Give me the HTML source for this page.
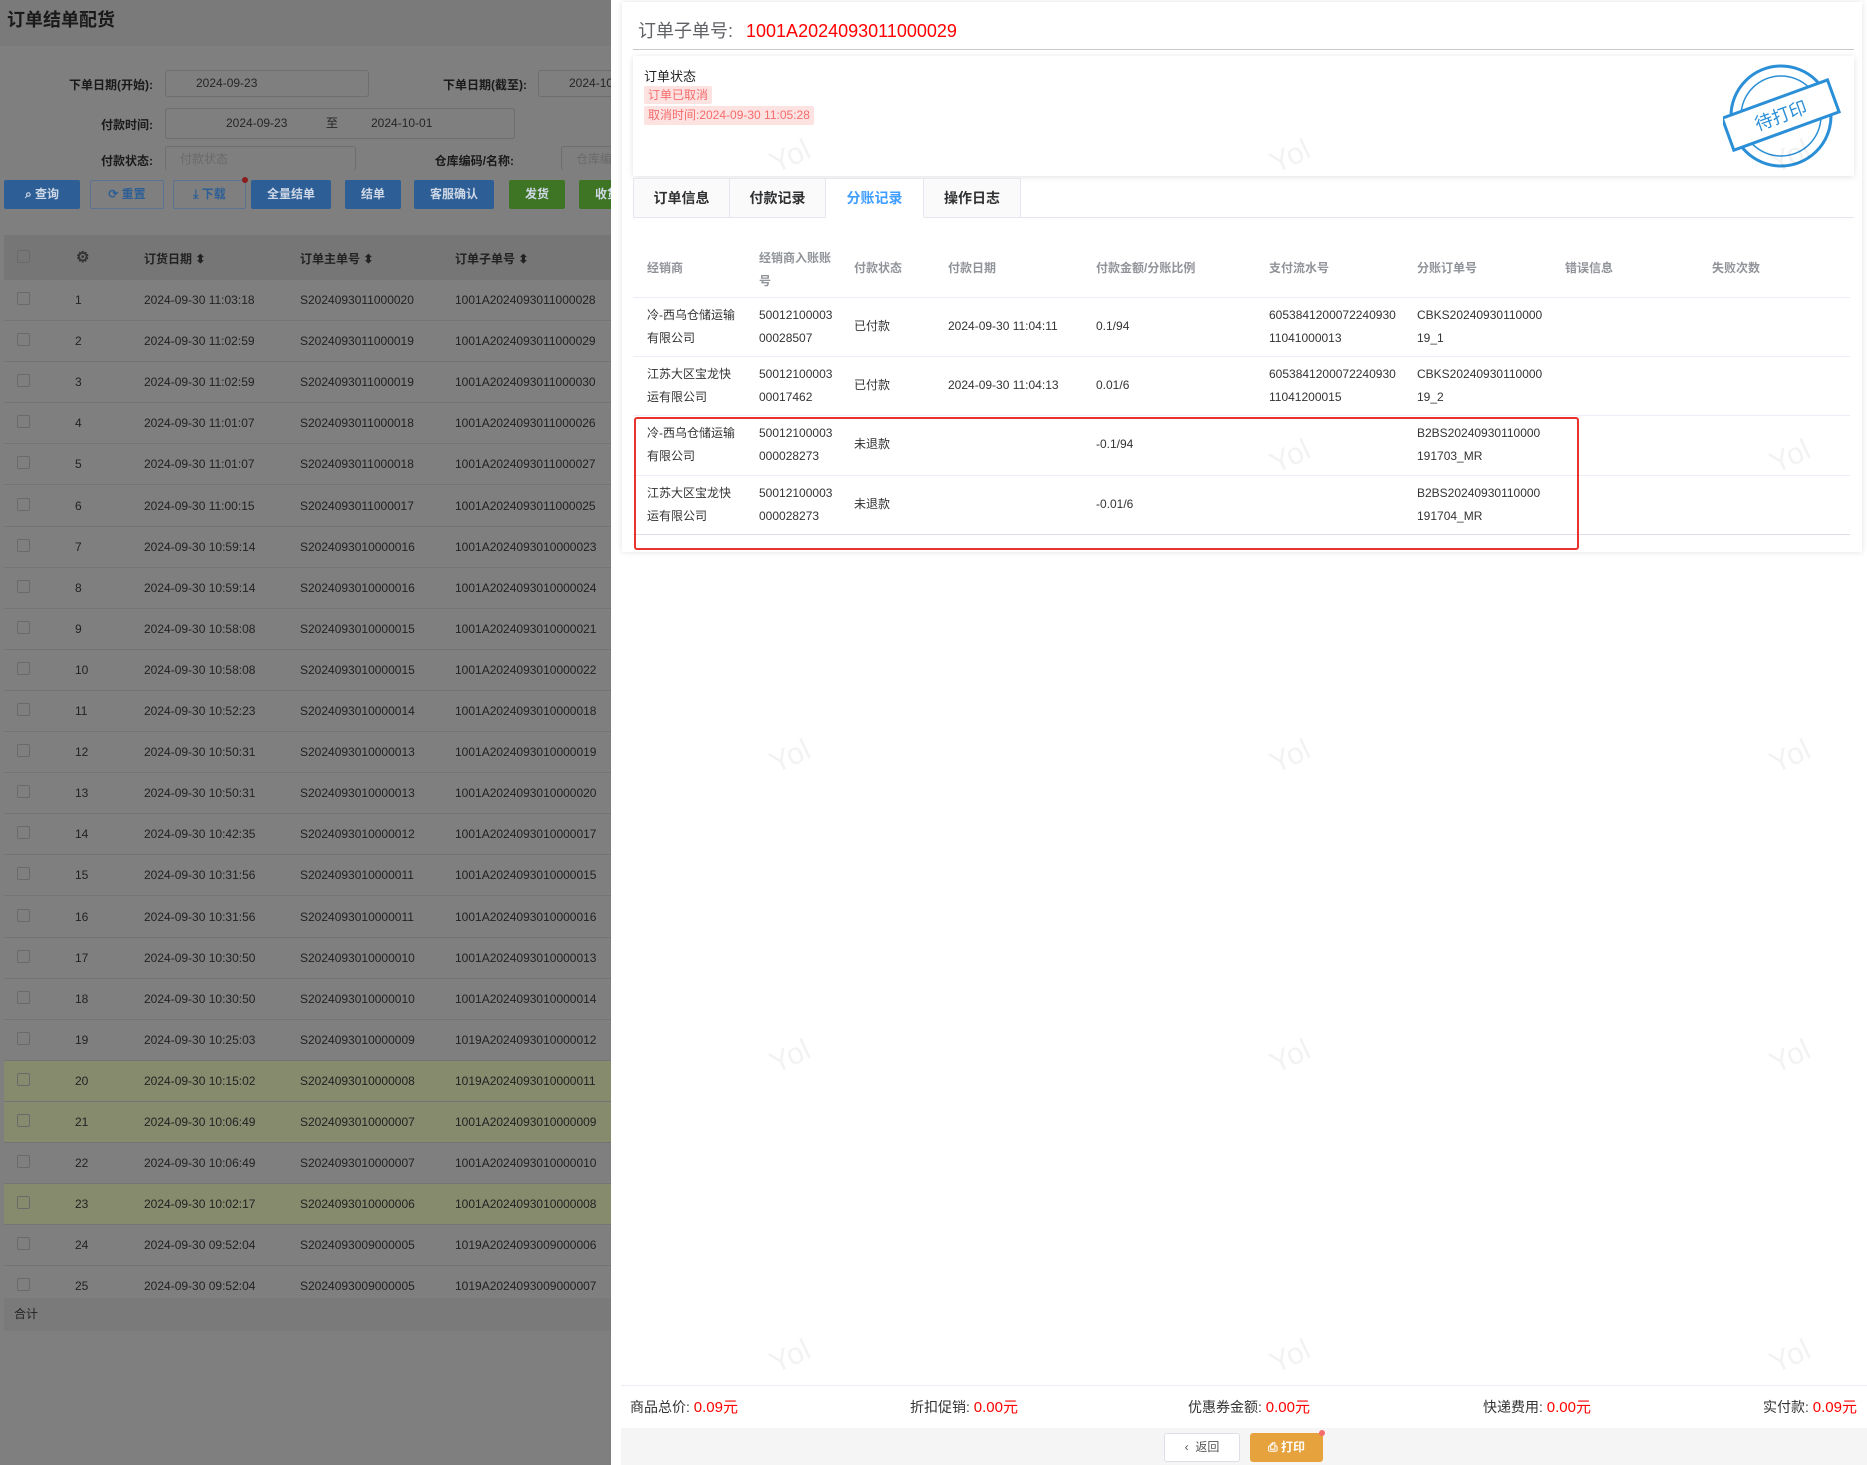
<!DOCTYPE html>
<html><head><meta charset="utf-8"><style>
*{box-sizing:border-box;margin:0;padding:0}
body{width:1867px;height:1465px;position:relative;overflow:hidden;background:#fff;font-family:"Liberation Sans","Noto Sans CJK SC",sans-serif;color:#333}
.a{position:absolute;white-space:nowrap}
#left{position:absolute;left:0;top:0;width:611px;height:1465px;background:#7f7f7f;overflow:hidden}
.lbl{font-size:12px;font-weight:bold;color:#1a1a1a;text-align:right}
.inp{border:1px solid #6e6e6e;border-radius:3px;height:27px;font-size:12px;color:#262626;line-height:25px}
.btn{height:29px;top:180px;border-radius:2px;color:#cfd8e6;font-size:12px;font-weight:bold;text-align:center;line-height:29px}
.row{position:absolute;left:4px;width:607px;height:41px;border-bottom:1px solid #747474;font-size:12px;color:#222}
.row span{position:absolute;top:13px}
.cb{position:absolute;left:13px;top:12px;width:13px;height:13px;border:1px solid #6a6a6a;border-radius:2px}
.wm{position:absolute;font-size:30px;color:rgba(0,0,0,0.05);transform:rotate(-25deg)}
th,td{text-align:left;font-weight:normal}
.th{font-size:12px;color:#909399;font-weight:bold}
.td{font-size:12px;color:#333;line-height:23px}
.hl{position:absolute;left:633px;width:1217px;height:1px;background:#ebeef5}
.tab{position:absolute;top:178px;height:40px;border:1px solid #e4e7ed;border-left:none;background:#fafafa;font-size:14px;font-weight:bold;text-align:center;line-height:38px;color:#303133}
.ft{font-size:14px;color:#333;top:1396px}
.ft b{color:#f00;font-weight:normal;font-size:15px}
</style></head><body>
<div id="left">
 <div class="a" style="left:0;top:0;width:611px;height:46px;background:#7a7a7a"></div>
 <div class="a" style="left:7px;top:6px;font-size:18px;font-weight:bold;color:#1a1a1a">订单结单配货</div>
 <div class="a lbl" style="left:40px;width:113px;top:76px">下单日期(开始):</div>
 <div class="a inp" style="left:165px;top:70px;width:204px;padding-left:30px">2024-09-23</div>
 <div class="a lbl" style="left:420px;width:107px;top:76px">下单日期(截至):</div>
 <div class="a inp" style="left:538px;top:70px;width:120px;padding-left:30px">2024-10-01</div>
 <div class="a lbl" style="left:40px;width:113px;top:116px">付款时间:</div>
 <div class="a inp" style="left:165px;top:108px;width:350px;height:31px;line-height:29px"><span class="a" style="left:60px">2024-09-23</span><span class="a" style="left:160px">至</span><span class="a" style="left:205px">2024-10-01</span></div>
 <div class="a lbl" style="left:40px;width:113px;top:152px">付款状态:</div>
 <div class="a inp" style="left:165px;top:146px;width:191px;height:25px;border-bottom:none;color:#6a6a6a;padding-left:14px">付款状态</div>
 <div class="a lbl" style="left:400px;width:114px;top:152px">仓库编码/名称:</div>
 <div class="a inp" style="left:561px;top:146px;width:100px;height:25px;border-bottom:none;color:#6a6a6a;padding-left:14px">仓库编码/名称</div>
 <div class="a btn" style="left:4px;width:76px;background:#2d5f96">⌕ 查询</div>
 <div class="a btn" style="left:90px;width:74px;border:1px solid #5a7393;color:#2d5f96;line-height:27px">⟳ 重置</div>
 <div class="a btn" style="left:173px;width:73px;border:1px solid #5a7393;color:#2d5f96;line-height:27px">⤓ 下载</div>
 <div class="a" style="left:242px;top:177px;width:6px;height:6px;border-radius:3px;background:#8a1d1d"></div>
 <div class="a btn" style="left:251px;width:80px;background:#2d5f96">全量结单</div>
 <div class="a btn" style="left:345px;width:56px;background:#2d5f96">结单</div>
 <div class="a btn" style="left:414px;width:80px;background:#2d5f96">客服确认</div>
 <div class="a btn" style="left:509px;width:56px;background:#3e7524">发货</div>
 <div class="a btn" style="left:579px;width:56px;background:#3e7524">收货</div>
 <div class="a" style="left:4px;top:235px;width:607px;height:45px;background:#767676;font-size:12px;font-weight:bold;color:#222">
  <div class="cb" style="top:15px"></div>
  <span class="a" style="left:72px;top:13px;font-size:15px;color:#333">⚙</span>
  <span class="a" style="left:140px;top:15px">订货日期 ⬍</span>
  <span class="a" style="left:296px;top:15px">订单主单号 ⬍</span>
  <span class="a" style="left:451px;top:15px">订单子单号 ⬍</span>
 </div>
 <div id="rows"></div>
 <div class="a" style="left:4px;top:1298px;width:607px;height:33px;background:#7a7a7a;font-size:12px;color:#222;padding:7px 10px">合计</div>
</div>
<script>
var d=[["2024-09-30 11:03:18","S2024093011000020","1001A2024093011000028"],["2024-09-30 11:02:59","S2024093011000019","1001A2024093011000029"],["2024-09-30 11:02:59","S2024093011000019","1001A2024093011000030"],["2024-09-30 11:01:07","S2024093011000018","1001A2024093011000026"],["2024-09-30 11:01:07","S2024093011000018","1001A2024093011000027"],["2024-09-30 11:00:15","S2024093011000017","1001A2024093011000025"],["2024-09-30 10:59:14","S2024093010000016","1001A2024093010000023"],["2024-09-30 10:59:14","S2024093010000016","1001A2024093010000024"],["2024-09-30 10:58:08","S2024093010000015","1001A2024093010000021"],["2024-09-30 10:58:08","S2024093010000015","1001A2024093010000022"],["2024-09-30 10:52:23","S2024093010000014","1001A2024093010000018"],["2024-09-30 10:50:31","S2024093010000013","1001A2024093010000019"],["2024-09-30 10:50:31","S2024093010000013","1001A2024093010000020"],["2024-09-30 10:42:35","S2024093010000012","1001A2024093010000017"],["2024-09-30 10:31:56","S2024093010000011","1001A2024093010000015"],["2024-09-30 10:31:56","S2024093010000011","1001A2024093010000016"],["2024-09-30 10:30:50","S2024093010000010","1001A2024093010000013"],["2024-09-30 10:30:50","S2024093010000010","1001A2024093010000014"],["2024-09-30 10:25:03","S2024093010000009","1019A2024093010000012"],["2024-09-30 10:15:02","S2024093010000008","1019A2024093010000011"],["2024-09-30 10:06:49","S2024093010000007","1001A2024093010000009"],["2024-09-30 10:06:49","S2024093010000007","1001A2024093010000010"],["2024-09-30 10:02:17","S2024093010000006","1001A2024093010000008"],["2024-09-30 09:52:04","S2024093009000005","1019A2024093009000006"],["2024-09-30 09:52:04","S2024093009000005","1019A2024093009000007"]];
var h="";for(var i=0;i<25;i++){var t=280+i*41.1;var bg=(i==19||i==20||i==22)?"background:#878b6e;":"";
h+='<div class="row" style="top:'+t+'px;'+bg+'"><div class="cb"></div><span style="left:71px">'+(i+1)+'</span><span style="left:140px">'+d[i][0]+'</span><span style="left:296px">'+d[i][1]+'</span><span style="left:451px">'+d[i][2]+'</span></div>';}
document.getElementById("rows").innerHTML=h;
</script>

<!-- right drawer -->
<div class="a" style="left:622px;top:2px;width:1240px;height:550px;box-shadow:0 0 6px rgba(0,0,0,0.12)"></div>
<div class="a" style="left:638px;top:17px;font-size:18px;color:#606266">订单子单号: <span style="color:#f00;margin-left:8px">1001A2024093011000029</span></div>
<div class="a" style="left:633px;top:49px;width:1221px;height:1px;background:#c8c9cc"></div>
<div class="a" style="left:633px;top:56px;width:1221px;height:120px;background:#fff;box-shadow:0 1px 6px rgba(0,0,0,0.12)">
 <div class="a" style="left:11px;top:10px;font-size:13px;color:#222">订单状态</div>
 <div class="a" style="left:11px;top:30px;height:18px;padding:0 4px;background:#fde2e2;color:#f56c6c;font-size:12px;line-height:18px;border-radius:2px">订单已取消</div>
 <div class="a" style="left:11px;top:50px;height:19px;padding:0 4px;background:#fde2e2;color:#f56c6c;font-size:12px;line-height:19px;border-radius:2px">取消时间:2024-09-30 11:05:28</div>
 <svg class="a" style="left:1090px;top:4px" width="120" height="110" viewBox="0 0 120 110">
  <circle cx="58" cy="56" r="50" fill="none" stroke="#2a8fd6" stroke-width="3"/>
  <circle cx="58" cy="56" r="40" fill="none" stroke="#2a8fd6" stroke-width="1.5"/>
  <g transform="rotate(-20 58 56)"><rect x="2" y="38" width="112" height="34" fill="#fff" stroke="#2a8fd6" stroke-width="3"/>
  <text x="58" y="62" font-size="18" fill="#2a8fd6" text-anchor="middle" font-family="Liberation Sans,Noto Sans CJK SC,sans-serif">待打印</text></g>
 </svg>
</div>
<div class="a" style="left:633px;top:217px;width:1221px;height:1px;background:#e4e7ed"></div>
<div class="tab" style="left:633px;width:97px;border-left:1px solid #e4e7ed">订单信息</div>
<div class="tab" style="left:730px;width:96px">付款记录</div>
<div class="tab" style="left:826px;width:98px;background:#fff;border-bottom-color:#fff;color:#409eff">分账记录</div>
<div class="tab" style="left:924px;width:97px">操作日志</div>

<div class="a th" style="left:647px;top:259px">经销商</div>
<div class="a th" style="left:759px;top:247px;line-height:23px;white-space:normal;width:80px">经销商入账账<br>号</div>
<div class="a th" style="left:854px;top:259px">付款状态</div>
<div class="a th" style="left:948px;top:259px">付款日期</div>
<div class="a th" style="left:1096px;top:259px">付款金额/分账比例</div>
<div class="a th" style="left:1269px;top:259px">支付流水号</div>
<div class="a th" style="left:1417px;top:259px">分账订单号</div>
<div class="a th" style="left:1565px;top:259px">错误信息</div>
<div class="a th" style="left:1712px;top:259px">失败次数</div>
<div class="hl" style="top:297px"></div>
<div class="hl" style="top:356px"></div>
<div class="hl" style="top:415px"></div>
<div class="hl" style="top:475px"></div>
<div class="hl" style="top:534px;background:#dcdfe6"></div>

<div class="a td" style="left:647px;top:304px">冷-西乌仓储运输<br>有限公司</div>
<div class="a td" style="left:759px;top:304px">50012100003<br>00028507</div>
<div class="a td" style="left:854px;top:315px">已付款</div>
<div class="a td" style="left:948px;top:315px">2024-09-30 11:04:11</div>
<div class="a td" style="left:1096px;top:315px">0.1/94</div>
<div class="a td" style="left:1269px;top:304px">6053841200072240930<br>11041000013</div>
<div class="a td" style="left:1417px;top:304px">CBKS20240930110000<br>19_1</div>

<div class="a td" style="left:647px;top:363px">江苏大区宝龙快<br>运有限公司</div>
<div class="a td" style="left:759px;top:363px">50012100003<br>00017462</div>
<div class="a td" style="left:854px;top:374px">已付款</div>
<div class="a td" style="left:948px;top:374px">2024-09-30 11:04:13</div>
<div class="a td" style="left:1096px;top:374px">0.01/6</div>
<div class="a td" style="left:1269px;top:363px">6053841200072240930<br>11041200015</div>
<div class="a td" style="left:1417px;top:363px">CBKS20240930110000<br>19_2</div>

<div class="a td" style="left:647px;top:422px">冷-西乌仓储运输<br>有限公司</div>
<div class="a td" style="left:759px;top:422px">50012100003<br>000028273</div>
<div class="a td" style="left:854px;top:433px">未退款</div>
<div class="a td" style="left:1096px;top:433px">-0.1/94</div>
<div class="a td" style="left:1417px;top:422px">B2BS20240930110000<br>191703_MR</div>

<div class="a td" style="left:647px;top:482px">江苏大区宝龙快<br>运有限公司</div>
<div class="a td" style="left:759px;top:482px">50012100003<br>000028273</div>
<div class="a td" style="left:854px;top:493px">未退款</div>
<div class="a td" style="left:1096px;top:493px">-0.01/6</div>
<div class="a td" style="left:1417px;top:482px">B2BS20240930110000<br>191704_MR</div>

<div class="a" style="left:634px;top:417px;width:945px;height:133px;border:2px solid #e8332e;border-radius:3px"></div>

<div class="wm" style="left:770px;top:140px">Yol</div><div class="wm" style="left:1270px;top:140px">Yol</div><div class="wm" style="left:1770px;top:140px">Yol</div>
<div class="wm" style="left:1270px;top:440px">Yol</div><div class="wm" style="left:1770px;top:440px">Yol</div>
<div class="wm" style="left:770px;top:740px">Yol</div><div class="wm" style="left:1270px;top:740px">Yol</div><div class="wm" style="left:1770px;top:740px">Yol</div>
<div class="wm" style="left:770px;top:1040px">Yol</div><div class="wm" style="left:1270px;top:1040px">Yol</div><div class="wm" style="left:1770px;top:1040px">Yol</div>
<div class="wm" style="left:770px;top:1340px">Yol</div><div class="wm" style="left:1270px;top:1340px">Yol</div><div class="wm" style="left:1770px;top:1340px">Yol</div>

<div class="a" style="left:621px;top:1385px;width:1246px;height:1px;background:#ebeef5"></div>
<div class="a ft" style="left:630px">商品总价: <b>0.09元</b></div>
<div class="a ft" style="left:910px">折扣促销: <b>0.00元</b></div>
<div class="a ft" style="left:1188px">优惠券金额: <b>0.00元</b></div>
<div class="a ft" style="left:1483px">快递费用: <b>0.00元</b></div>
<div class="a ft" style="right:10px">实付款: <b>0.09元</b></div>
<div class="a" style="left:621px;top:1428px;width:1246px;height:37px;background:#f5f5f5"></div>
<div class="a" style="left:1164px;top:1433px;width:76px;height:29px;border:1px solid #dcdfe6;background:#fff;border-radius:3px;font-size:12px;line-height:27px;text-align:center;color:#555">‹&nbsp;&nbsp;返回</div>
<div class="a" style="left:1250px;top:1433px;width:73px;height:29px;background:#e6a23c;border-radius:3px;font-size:12px;line-height:29px;text-align:center;color:#fff;font-weight:bold">⎙ 打印</div>
<div class="a" style="left:1319px;top:1430px;width:6px;height:6px;border-radius:3px;background:#f56c6c"></div>
</body></html>
